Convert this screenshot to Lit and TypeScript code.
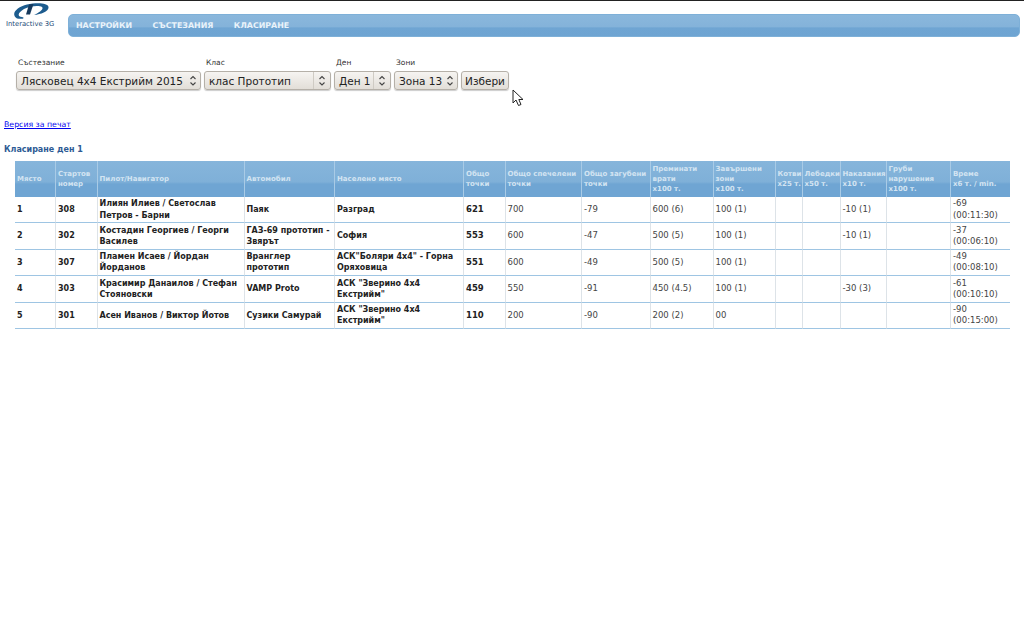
import { LitElement, html, css, svg } from "lit";
import { customElement } from "lit/decorators.js";

const widths = [41, 41.5, 147, 90.5, 129, 41.5, 76.5, 68.5, 63, 62, 27, 38, 46, 64.5, 59];
const heads = [
  ["Място"], ["Стартов", "номер"], ["Пилот/Навигатор"], ["Автомобил"], ["Населено място"],
  ["Общо", "точки"], ["Общо спечелени", "точки"], ["Общо загубени", "точки"],
  ["Преминати", "врати", "x100 т."], ["Завършени", "зони", "x100 т."], ["Котви", "x25 т."],
  ["Лебедки", "x50 т."], ["Наказания", "x10 т."], ["Груби", "нарушения", "x100 т."], ["Време", "x6 т. / min."],
];
const rows = [
  ["1", "308", "Илиян Илиев / Светослав Петров - Барни", "Паяк", "Разград", "621", "700", "-79", "600 (6)", "100 (1)", "", "", "-10 (1)", "", "-69 (00:11:30)"],
  ["2", "302", "Костадин Георгиев / Георги Василев", "ГАЗ-69 прототип - Звярът", "София", "553", "600", "-47", "500 (5)", "100 (1)", "", "", "-10 (1)", "", "-37 (00:06:10)"],
  ["3", "307", "Пламен Исаев / Йордан Йорданов", "Вранглер прототип", "АСК\"Боляри 4х4\" - Горна Оряховица", "551", "600", "-49", "500 (5)", "100 (1)", "", "", "", "", "-49 (00:08:10)"],
  ["4", "303", "Красимир Данаилов / Стефан Стояновски", "VAMP Proto", "АСК \"Зверино 4х4 Екстрийм\"", "459", "550", "-91", "450 (4.5)", "100 (1)", "", "", "-30 (3)", "", "-61 (00:10:10)"],
  ["5", "301", "Асен Иванов / Виктор Йотов", "Сузики Самурай", "АСК \"Зверино 4х4 Екстрийм\"", "110", "200", "-90", "200 (2)", "00", "", "", "", "", "-90 (00:15:00)"],
];
const fields = [
  { label: "Състезание", value: "Лясковец 4х4 Екстрийм 2015", w: 185, sep: false },
  { label: "Клас", value: "клас Прототип", w: 127, sep: true },
  { label: "Ден", value: "Ден 1", w: 57, sep: true },
  { label: "Зони", value: "Зона 13", w: 64, sep: false },
];
const arrows = svg`<path d="M1.5 4 L4 1.5 L6.5 4 M1.5 7.5 L4 10 L6.5 7.5" fill="none" stroke="#444" stroke-width="1.1"/>`;

@customElement("app-root")
export class AppRoot extends LitElement {
  static styles = css`
    :host { display: block; position: relative; width: 1024px; height: 640px; background: #fff; overflow: hidden;
      font-family: "DejaVu Sans", sans-serif; color: #222; border-top: 1px solid #222; box-sizing: border-box; }
    .top { display: flex; height: 44px; padding-right: 4px; }
    .logo { width: 68px; flex: none; }
    .logo svg { display: block; margin: 2px 0 0 13px; }
    .logo span { display: block; font-size: 6.8px; line-height: 8px; color: #234a78; white-space: nowrap; margin: 1px 0 0 6px; }
    .nav { margin-top: 13px; height: 23px; flex: 1; box-sizing: border-box; border: 1px solid #7eb0d8;
      border-radius: 5px; display: flex; align-items: center; gap: 20.5px; padding: 0 7px;
      background: linear-gradient(#8ab7dc 0%, #84b3da 55%, #6fa5d3 62%, #6ea4d2 100%);
      color: #eaf3fa; font-size: 7.9px; font-weight: bold; }
    .form { display: flex; align-items: flex-start; gap: 3px; padding: 13px 0 0 16px; height: 60px; box-sizing: border-box; }
    .field { display: flex; flex-direction: column; }
    .field label { font-size: 7.5px; line-height: 10px; color: #333; padding-left: 2px; height: 13px; }
    .sel, .btn { height: 19px; box-sizing: border-box; border: 1px solid #b5b0a8; border-radius: 3px;
      background: linear-gradient(#f6f4f1, #e2ded8); box-shadow: 0 1px 1px #ccc; font-size: 10.5px; color: #222;
      display: flex; align-items: center; white-space: nowrap; }
    .sel { padding-left: 4px; justify-content: space-between; }
    .arr { display: flex; align-items: center; justify-content: center; width: 14px; height: 100%; flex: none; }
    .arr.sep { border-left: 1px solid #cfcbc4; width: 16px; }
    .btn { margin-top: 13px; width: 48px; justify-content: center; }
    a { display: block; margin-left: 4px; font-size: 7.8px; color: #00e; line-height: 10px; padding-top: 15px; }
    h2 { margin: 0; padding: 15px 0 0 4px; font-size: 8px; line-height: 10px; color: #2d5a94; font-weight: bold; }
    .wrap { padding: 6px 0 0 15px; }
    table { border-collapse: separate; border-spacing: 0; table-layout: fixed; width: 995px; font-size: 8.5px; line-height: 11.3px; }
    th { height: 36px; box-sizing: border-box; padding: 0 2px; text-align: left; font-weight: bold; font-size: 7px; line-height: 10px;
      color: #d3e4f2; border-right: 1px solid #a9cbe6; white-space: nowrap;
      background: linear-gradient(#86b5db 0%, #7fb0d8 58%, #6fa5d3 64%, #6fa5d3 100%); }
    th:last-child, td:last-child { border-right: none; }
    td { height: 26.4px; box-sizing: border-box; padding: 0 2px; border-right: 1px solid #dde3e8; border-bottom: 1.5px solid #9ec5e3; color: #444; background: #fff; }
    td.b { font-weight: bold; color: #222; font-size: 8px; }
    td.n { font-size: 8.5px; }
    .cursor { position: absolute; left: 512px; top: 88px; }
  `;

  render() {
    return html`
      <div class="top">
        <div class="logo">
          <svg width="36" height="16" viewBox="0 0 36 16">
            <path d="M4 15.5 C-3 11 4 4 14 1.5 C24 -0.5 35 0 35.5 4 C36 8.5 28 11 21 12 C27 9 31 6 29 4 C26 2 17 3 11 6 C6 9 3 13 9 14 C13 15 9 16.5 4 15.5Z" fill="#1d5c8e"/>
            <path d="M16 1.5 L13 11.5 L17 11.5 L20.5 1Z" fill="#16395c"/>
          </svg>
          <span>Interactive 3G</span>
        </div>
        <div class="nav"><span>НАСТРОЙКИ</span><span>СЪСТЕЗАНИЯ</span><span>КЛАСИРАНЕ</span></div>
      </div>
      <div class="form">
        ${fields.map((f) => html`
          <div class="field">
            <label>${f.label}</label>
            <div class="sel" style="width:${f.w}px">
              <span>${f.value}</span>
              <span class="arr ${f.sep ? "sep" : ""}"><svg width="8" height="12" viewBox="0 0 8 12">${arrows}</svg></span>
            </div>
          </div>`)}
        <div class="btn">Избери</div>
      </div>
      <a href="#">Версия за печат</a>
      <h2>Класиране ден 1</h2>
      <div class="wrap">
        <table>
          <colgroup>${widths.map((w) => html`<col style="width:${w}px" />`)}</colgroup>
          <thead><tr>${heads.map((h) => html`<th>${h.map((l, i) => html`${i ? html`<br />` : ""}${l}`)}</th>`)}</tr></thead>
          <tbody>
            ${rows.map((r) => html`<tr>${r.map((c, i) => html`<td class="${i < 5 ? "b" : i === 5 ? "b n" : ""}">${c}</td>`)}</tr>`)}
          </tbody>
        </table>
      </div>
      <svg class="cursor" width="14" height="18" viewBox="0 0 14 18">
        <path d="M1 1 L1 14 L4 11 L6.5 16.5 L9 15.5 L6.8 10.5 L11 10.5 Z" fill="#fff" stroke="#222" stroke-width="1"/>
      </svg>
    `;
  }
}
